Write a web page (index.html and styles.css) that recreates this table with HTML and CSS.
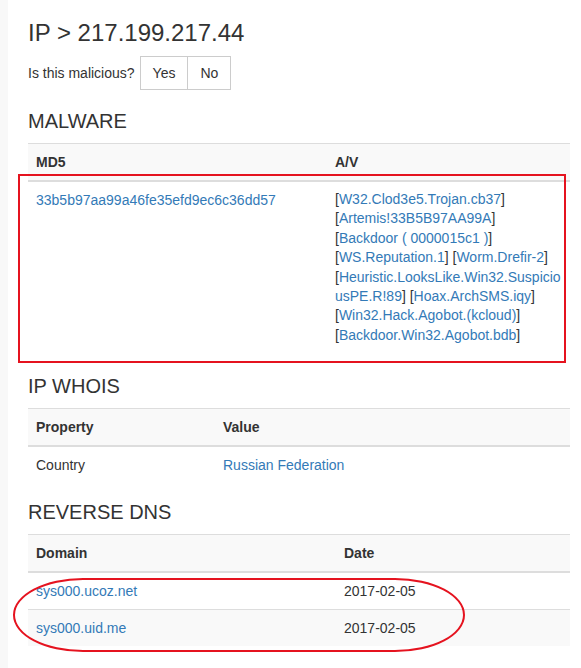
FILE: index.html
```html
<!DOCTYPE html>
<html>
<head>
<meta charset="utf-8">
<link rel="stylesheet" href="styles.css">
</head>
<body>
<div class="page">
  <h1 class="title">IP &gt; 217.199.217.44</h1>
  <div class="vote">
    <span class="vote-label">Is this malicious?</span>
    <div class="btn-group">
      <button class="btn">Yes</button>
      <button class="btn">No</button>
    </div>
  </div>

  <h2 class="section section-first">MALWARE</h2>
  <div class="table-wrap">
    <table class="tbl tbl-malware">
      <colgroup><col class="c1"><col></colgroup>
      <thead><tr><th>MD5</th><th>A/V</th></tr></thead>
      <tbody>
        <tr>
          <td><a href="#">33b5b97aa99a46fe35efd9ec6c36dd57</a></td>
          <td class="av">[<a href="#">W32.Clod3e5.Trojan.cb37</a>] [<a href="#">Artemis!33B5B97AA99A</a>] [<a href="#">Backdoor ( 0000015c1 )</a>] [<a href="#">WS.Reputation.1</a>] [<a href="#">Worm.Drefir-2</a>] [<a href="#">Heuristic.LooksLike.Win32.SuspiciousPE.R!89</a>] [<a href="#">Hoax.ArchSMS.iqy</a>] [<a href="#">Win32.Hack.Agobot.(kcloud)</a>] [<a href="#">Backdoor.Win32.Agobot.bdb</a>]</td>
        </tr>
      </tbody>
    </table>
    <div class="mark-rect"></div>
  </div>

  <h2 class="section section-mid">IP WHOIS</h2>
  <div class="table-wrap">
    <table class="tbl tbl-whois">
      <colgroup><col class="c1"><col></colgroup>
      <thead><tr><th>Property</th><th>Value</th></tr></thead>
      <tbody>
        <tr><td>Country</td><td><a href="#">Russian Federation</a></td></tr>
      </tbody>
    </table>
  </div>

  <h2 class="section section-last">REVERSE DNS</h2>
  <div class="table-wrap">
    <table class="tbl tbl-dns">
      <colgroup><col class="c1"><col></colgroup>
      <thead><tr><th>Domain</th><th>Date</th></tr></thead>
      <tbody>
        <tr><td><a href="#">sys000.ucoz.net</a></td><td>2017-02-05</td></tr>
        <tr><td><a href="#">sys000.uid.me</a></td><td>2017-02-05</td></tr>
      </tbody>
    </table>
    <div class="mark-oval"></div>
  </div>
</div>
</body>
</html>
```

FILE: styles.css
```css
html, body {
  margin: 0;
  padding: 0;
  background: #fff;
}
body {
  font-family: "Liberation Sans", Arial, sans-serif;
  font-size: 14px;
  color: #333;
}
a {
  color: #337ab7;
  text-decoration: none;
}
.page {
  border-left: 8px solid #f8f8f8;
  padding: 20px 11px 0 20px;
  min-height: 648px;
}
.title {
  margin: 0;
  font-size: 24px;
  font-weight: 400;
  line-height: 26px;
  color: #333;
}
.vote {
  display: flex;
  align-items: center;
  gap: 5px;
  margin-top: 10px;
}
.vote-label {
  font-size: 14px;
}
.btn-group {
  display: flex;
}
.btn {
  font-family: "Liberation Sans", Arial, sans-serif;
  font-size: 14px;
  line-height: 20px;
  padding: 6px 12px;
  border: 1px solid #ccc;
  background: #fff;
  color: #333;
  margin: 0;
  border-radius: 0;
}
.btn + .btn {
  margin-left: -1px;
}
.section {
  margin: 0 0 11px;
  font-size: 20px;
  font-weight: 400;
  line-height: 22px;
  color: #333;
}
.section-first { margin-top: 20px; }
.section-mid { margin-top: 22px; }
.section-last { margin-top: 18px; }
.table-wrap {
  position: relative;
}
.tbl {
  width: 100%;
  table-layout: fixed;
  border-collapse: collapse;
  border-spacing: 0;
}
.tbl th, .tbl td {
  text-align: left;
  vertical-align: top;
  padding: 8px;
  line-height: 20px;
  border-top: 1px solid #ddd;
}
.tbl thead th {
  font-weight: 700;
  background: #f9f9f9;
  border-bottom: 2px solid #ddd;
}
.tbl tbody tr:nth-child(even) td {
  background: #f9f9f9;
}
.tbl tbody tr:first-child td {
  border-top: 0;
}
.tbl-malware .c1 { width: 299px; }
.tbl-malware .av {
  line-height: 19.4px;
  overflow-wrap: break-word;
}
.tbl-whois .c1 { width: 187px; }
.tbl-dns .c1 { width: 308px; }

.mark-rect {
  position: absolute;
  left: -10px;
  top: 31px;
  width: 544px;
  height: 185px;
  border: 2px solid #e5131f;
}
.mark-oval {
  position: absolute;
  left: -15px;
  top: 44px;
  width: 448px;
  height: 70px;
  border: 2px solid #e5131f;
  border-radius: 70px / 37px;
}
```
